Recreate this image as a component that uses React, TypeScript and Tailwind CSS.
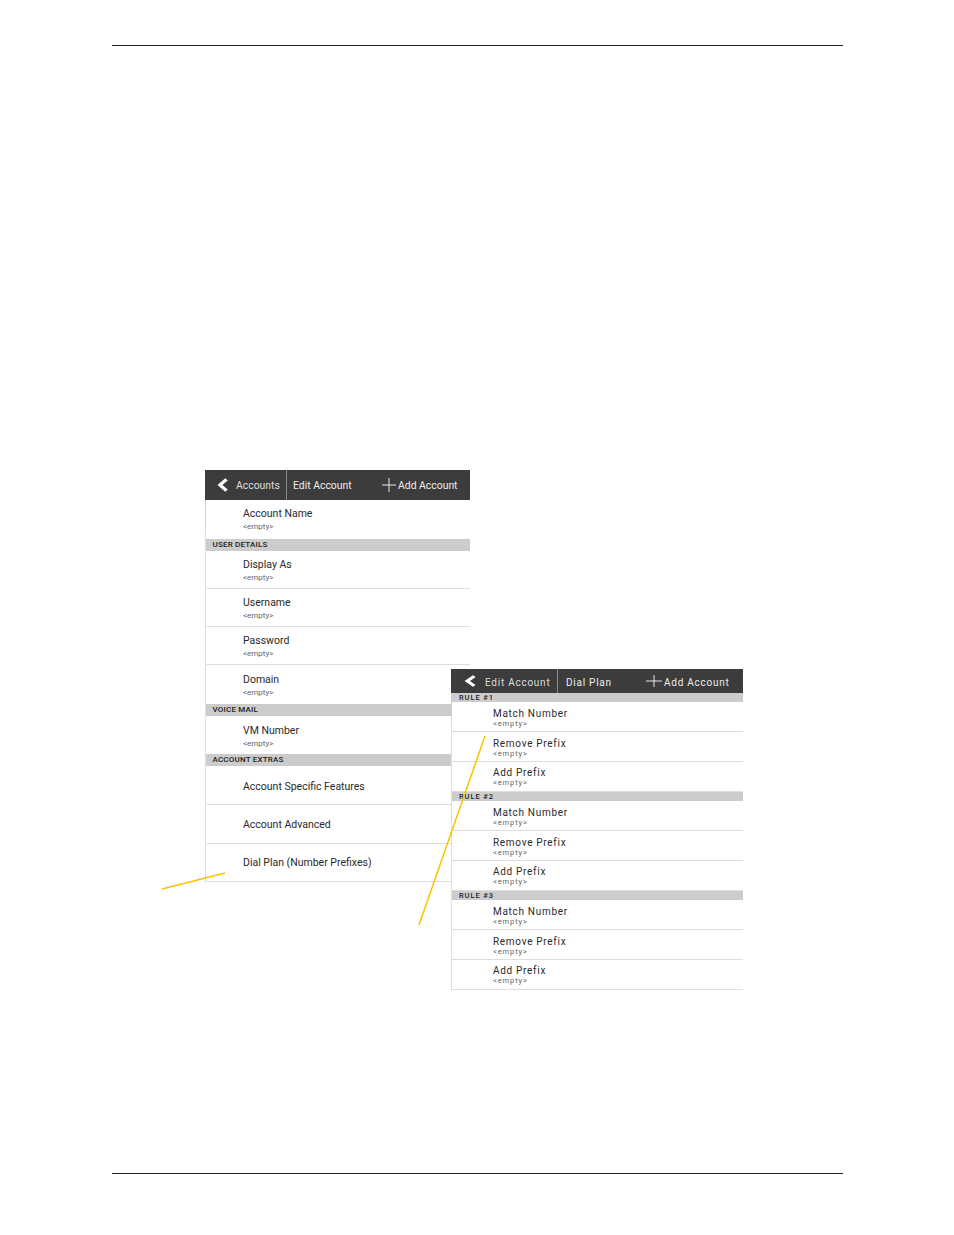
import React from 'react';

const font = { fontFamily: 'Roboto, sans-serif' };

function Chevron({ className, weight = 3.500 }: { className: string; weight?: number }) {
  return (
    <svg viewBox="0 0 12 16" preserveAspectRatio="none" className={className}>
      <path d="M9.500 1.500 3 8l6.500 6.500" fill="none" stroke="#fff" strokeWidth={weight} />
    </svg>
  );
}

function PlusMark({ className }: { className: string }) {
  return (
    <svg viewBox="0 0 16 16" preserveAspectRatio="none" className={className}>
      <path d="M8 0v16M0 8h16" fill="none" stroke="#fff" strokeWidth="1" />
    </svg>
  );
}

function LeftRow({ title, sub = true, h = 'h-[38px]', border = true, nudge = true }: { title: string; sub?: boolean; h?: string; border?: boolean; nudge?: boolean }) {
  return (
    <div className={`${h} ${border ? 'border-b border-[#dedede]' : ''} ${nudge ? 'pt-[2px]' : ''} pl-[37px] flex flex-col justify-center`}>
      <div className="text-[10.5px] leading-[13px] text-[#2a2a2a]">{title}</div>
      {sub && <div className="text-[8px] leading-[10px] mt-[2px] text-[#666]">&lt;empty&gt;</div>}
    </div>
  );
}

function LeftBand({ label }: { label: string }) {
  return (
    <div className="h-[12px] bg-[#cccccc] pl-[6.500px] text-[8px] leading-[12px] font-medium tracking-[0.2px] text-[#222]">{label}</div>
  );
}

function RightRow({ title, tight }: { title: string; tight: boolean }) {
  return (
    <div className={`h-[30px] border-b border-[#dedede] pl-[41px] ${tight ? 'pt-[4px]' : 'pt-[5px]'}`}>
      <div className="text-[10px] leading-[13px] tracking-[0.7px] text-[#2a2a2a]">{title}</div>
      <div className="text-[7.500px] leading-[8px] tracking-[0.9px] text-[#666]">&lt;empty&gt;</div>
    </div>
  );
}

function RightBand({ label }: { label: string }) {
  return (
    <div className="h-[9px] bg-[#cccccc] pl-[7px] text-[7.500px] leading-[9px] font-medium tracking-[0.9px] text-[#222]">{label}</div>
  );
}

function LeftPanel() {
  return (
    <div className="w-[265px] shrink-0">
      <div className="h-[30px] bg-[#3c3c3c] flex items-center text-white text-[10.400px]">
        <Chevron className="w-[12px] h-[14px] ml-[12px]" />
        <span className="ml-[7px] w-[50px] pt-[2px] text-[#ddd]">Accounts</span>
        <span className="w-px h-full bg-[#8a8a8a]" />
        <span className="ml-[6px] w-[89px] pt-[2px] text-[#eee]">Edit Account</span>
        <PlusMark className="w-[14px] h-[14px]" />
        <span className="ml-[2px] pt-[2px] text-[#eee]">Add Account</span>
      </div>
      <div className="relative border-l border-[#dedede]">
        <div className="absolute -left-px top-0 w-px h-[29px] bg-[#fbd44c]" />
        <LeftRow title="Account Name" h="h-[39px]" border={false} nudge={false} />
        <LeftBand label="USER DETAILS" />
        <LeftRow title="Display As" />
        <LeftRow title="Username" />
        <LeftRow title="Password" />
        <LeftRow title="Domain" h="h-[39px]" border={false} />
        <LeftBand label="VOICE MAIL" />
        <LeftRow title="VM Number" border={false} />
        <LeftBand label="ACCOUNT EXTRAS" />
        <LeftRow title="Account Specific Features" sub={false} h="h-[39px]" />
        <LeftRow title="Account Advanced" sub={false} h="h-[39px]" nudge={false} />
        <LeftRow title="Dial Plan (Number Prefixes)" sub={false} nudge={false} />
      </div>
    </div>
  );
}

const ruleRows = ['Match Number', 'Remove Prefix', 'Add Prefix'];

function RightPanel() {
  return (
    <div className="relative z-10 w-[292px] shrink-0 -ml-[19px] mt-[199px] bg-white">
      <div className="h-[24px] bg-[#3c3c3c] flex items-center text-white text-[10px] tracking-[0.75px]">
        <Chevron className="w-[13px] h-[12px] ml-[13px]" />
        <span className="ml-[8px] w-[72px] pt-[2px] text-[#ddd]">Edit Account</span>
        <span className="w-px h-full bg-[#8a8a8a]" />
        <span className="ml-[8px] w-[80px] pt-[2px] text-[#eee]">Dial Plan</span>
        <PlusMark className="w-[16px] h-[12px]" />
        <span className="ml-[2px] pt-[2px] text-[#eee]">Add Account</span>
      </div>
      <div className="relative border-l border-[#dedede]">
        <div className="absolute -left-px top-0 w-px h-[22px] bg-[#fbd44c]" />
        {['RULE #1', 'RULE #2', 'RULE #3'].map((rule) => (
          <div key={rule}>
            <RightBand label={rule} />
            {ruleRows.map((row, i) => (
              <RightRow key={row} title={row} tight={i === 2} />
            ))}
          </div>
        ))}
      </div>
    </div>
  );
}

export default function App() {
  return (
    <div style={font} className="relative w-[954px] h-[1235px] bg-white overflow-hidden flex flex-col px-[112px] pt-[45px]">
      <div className="w-[731px] h-px bg-[#222]" />
      <div className="flex ml-[93px] mt-[424px]">
        <LeftPanel />
        <RightPanel />
      </div>
      <div className="mt-auto mb-[61px] w-[731px] h-px bg-[#222]" />

      {/* callout lines sit over both screenshots */}
      <svg className="absolute inset-0 z-20 pointer-events-none" width="954" height="1235">
        <path d="M162 889 225 873" stroke="#fcc200" strokeWidth="1.5" fill="none" />
        <path d="M485 736 419 925" stroke="#fcc200" strokeWidth="1.5" fill="none" />
      </svg>
    </div>
  );
}
